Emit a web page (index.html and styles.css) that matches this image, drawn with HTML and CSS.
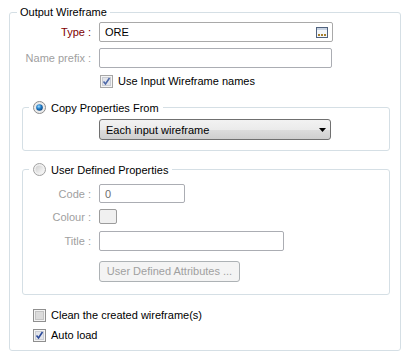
FILE: index.html
```html
<!DOCTYPE html>
<html lang="en">
<head>
  <meta charset="UTF-8">
  <title>Output Wireframe</title>
  <link rel="stylesheet" href="styles.css">
</head>
<body>

  <fieldset class="outer">
    <legend class="legend-text">Output Wireframe</legend>

    <div class="row row-type">
      <span class="lbl lbl-required">Type :</span>
      <div class="field field-type">
        <span class="field-value">ORE</span>
        <svg class="browse-icon" width="12" height="11" viewBox="0 0 12 11">
          <rect x="0.5" y="0.5" width="11" height="10" fill="#f3f6fa" stroke="#50627e"/>
          <rect x="1" y="1" width="10" height="2" fill="#c9d4e3"/>
          <rect x="2" y="7" width="2" height="2" fill="#a7802e"/>
          <rect x="5" y="7" width="2" height="2" fill="#a7802e"/>
          <rect x="8" y="7" width="2" height="2" fill="#a7802e"/>
        </svg>
      </div>
    </div>

    <div class="row row-prefix">
      <span class="lbl lbl-disabled">Name prefix :</span>
      <div class="field field-prefix"></div>
    </div>

    <div class="row row-check">
      <span class="lbl"></span>
      <label class="check">
        <svg class="box" width="13" height="13" viewBox="0 0 13 13">
          <rect x="0.5" y="0.5" width="12" height="12" fill="#f4f4f4" stroke="#a6a6a6"/>
          <rect x="2.5" y="2.5" width="8" height="8" fill="#e2e4ea" stroke="#c9ccd3"/>
          <path d="M3.5 6.5 L5.5 9 L9.5 3" fill="none" stroke="#4d68a8" stroke-width="1.6"/>
        </svg>
        <span>Use Input Wireframe names</span>
      </label>
    </div>

    <fieldset class="group group-copy">
      <legend class="legend-radio">
        <svg class="radio" width="13" height="13" viewBox="0 0 13 13">
          <defs>
            <radialGradient id="dot" cx="0.4" cy="0.35" r="0.7">
              <stop offset="0" stop-color="#9fdcff"/>
              <stop offset="0.5" stop-color="#1f7cc8"/>
              <stop offset="1" stop-color="#0a3f79"/>
            </radialGradient>
          </defs>
          <circle cx="6.5" cy="6.5" r="6" fill="#ececec" stroke="#8c8c8c"/>
          <circle cx="6.5" cy="6.5" r="3.3" fill="url(#dot)"/>
        </svg>
        <span>Copy Properties From</span>
      </legend>
      <div class="row row-select">
        <span class="lbl"></span>
        <div class="select">
          <span>Each input wireframe</span>
          <svg width="7" height="4" viewBox="0 0 7 4"><path d="M0 0 H7 L3.5 4 Z" fill="#000"/></svg>
        </div>
      </div>
    </fieldset>

    <fieldset class="group group-user">
      <legend class="legend-radio">
        <svg class="radio" width="13" height="13" viewBox="0 0 13 13">
          <defs>
            <linearGradient id="off" x1="0" y1="0" x2="1" y2="1">
              <stop offset="0" stop-color="#cfcfcf"/>
              <stop offset="1" stop-color="#fafafa"/>
            </linearGradient>
          </defs>
          <circle cx="6.5" cy="6.5" r="6" fill="#f1f1f1" stroke="#a0a0a0"/>
          <circle cx="6.5" cy="6.5" r="4" fill="url(#off)"/>
        </svg>
        <span>User Defined Properties</span>
      </legend>

      <div class="row row-code">
        <span class="lbl lbl-disabled">Code :</span>
        <div class="field field-code"><span class="field-value muted">0</span></div>
      </div>

      <div class="row row-colour">
        <span class="lbl lbl-disabled">Colour :</span>
        <div class="swatch"></div>
      </div>

      <div class="row row-title">
        <span class="lbl lbl-disabled">Title :</span>
        <div class="field field-title"></div>
      </div>

      <div class="row row-button">
        <span class="lbl"></span>
        <div class="button-disabled">User Defined Attributes ...</div>
      </div>
    </fieldset>

    <label class="check check-outer check-clean">
      <svg class="box" width="13" height="13" viewBox="0 0 13 13">
        <rect x="0.5" y="0.5" width="12" height="12" fill="#f4f4f4" stroke="#8f8f8f"/>
        <rect x="2.5" y="2.5" width="8" height="8" fill="#dcdcdc" stroke="#c4c4c4"/>
      </svg>
      <span>Clean the created wireframe(s)</span>
    </label>

    <label class="check check-outer check-auto">
      <svg class="box" width="13" height="13" viewBox="0 0 13 13">
        <rect x="0.5" y="0.5" width="12" height="12" fill="#f4f4f4" stroke="#8f8f8f"/>
        <rect x="2.5" y="2.5" width="8" height="8" fill="#e2e4ea" stroke="#c9ccd3"/>
        <path d="M3.5 6.5 L5.5 9 L9.5 3" fill="none" stroke="#2b4a9a" stroke-width="1.6"/>
      </svg>
      <span>Auto load</span>
    </label>
  </fieldset>

</body>
</html>
```

FILE: styles.css
```css
body {
  margin: 0;
  padding: 5px 8px 0 9px;
  background: #fff;
  font-family: "Liberation Sans", Arial, sans-serif;
  font-size: 11px;
  color: #000;
}

fieldset {
  margin: 0;
  border: 1px solid #d5dfe5;
  border-radius: 3px;
  min-width: 0;
}

legend {
  line-height: 14px;
}

.outer {
  width: 392px;
  box-sizing: border-box;
  padding: 0 0 8px 0;
}

.legend-text {
  padding: 0 3px;
  margin-left: 7px;
}

.row {
  display: flex;
  align-items: center;
}

.lbl {
  width: 81px;
  margin-right: 8px;
  text-align: right;
  flex: none;
}

.lbl-required {
  color: #800000;
}

.lbl-disabled {
  color: #a0a0a0;
}

.field {
  box-sizing: border-box;
  height: 20px;
  border: 1px solid #abadb3;
  border-radius: 2px;
  background: #fff;
  display: flex;
  align-items: center;
  padding: 0 4px 0 5px;
}

.field-value {
  flex: 1;
}

.muted {
  color: #6d6d6d;
}

.field-type {
  width: 234px;
  border-color: #a9a9a9;
}

.row-type {
  margin-top: 3px;
}

.row-prefix {
  margin-top: 6px;
}

.field-prefix {
  width: 233px;
}

.row-check {
  margin-top: 6px;
  height: 14px;
}

.check {
  display: flex;
  align-items: center;
  gap: 5px;
  line-height: 14px;
}

.check .box {
  flex: none;
  margin-left: 1px;
}

.group {
  margin: 12px 10px 0 12px;
  padding: 0 0 10px 0;
}

.group .lbl {
  width: 68px;
}

.legend-radio {
  display: flex;
  align-items: center;
  gap: 5px;
  padding: 0 4px;
  margin-left: 6px;
  height: 15px;
}

.group-copy .row-select {
  margin-top: 4px;
}

.select {
  box-sizing: border-box;
  width: 232px;
  height: 21px;
  border: 1px solid #707070;
  border-radius: 3px;
  background: linear-gradient(#f2f2f2 0%, #ebebeb 50%, #dddddd 51%, #cfcfcf 100%);
  display: flex;
  align-items: center;
  justify-content: space-between;
  padding: 0 4px 0 6px;
}

.group-user {
  margin-top: 11px;
  padding-bottom: 12px;
}

.row-code {
  margin-top: 7px;
}

.field-code {
  width: 86px;
  height: 19px;
}

.row-colour {
  margin-top: 6px;
}

.swatch {
  box-sizing: border-box;
  width: 18px;
  height: 15px;
  border: 1px solid #9c9c9c;
  border-radius: 2px;
  background: #f0f0f0;
}

.row-title {
  margin-top: 7px;
}

.field-title {
  width: 185px;
}

.row-button {
  margin-top: 10px;
}

.button-disabled {
  box-sizing: border-box;
  width: 141px;
  height: 21px;
  border: 1px solid #adb2b5;
  border-radius: 3px;
  background: #f4f4f4;
  color: #a0a0a0;
  text-align: center;
  line-height: 19px;
}

.check-outer {
  margin-left: 22px;
}

.check-clean {
  margin-top: 13px;
}

.check-auto {
  margin-top: 6px;
}
```
